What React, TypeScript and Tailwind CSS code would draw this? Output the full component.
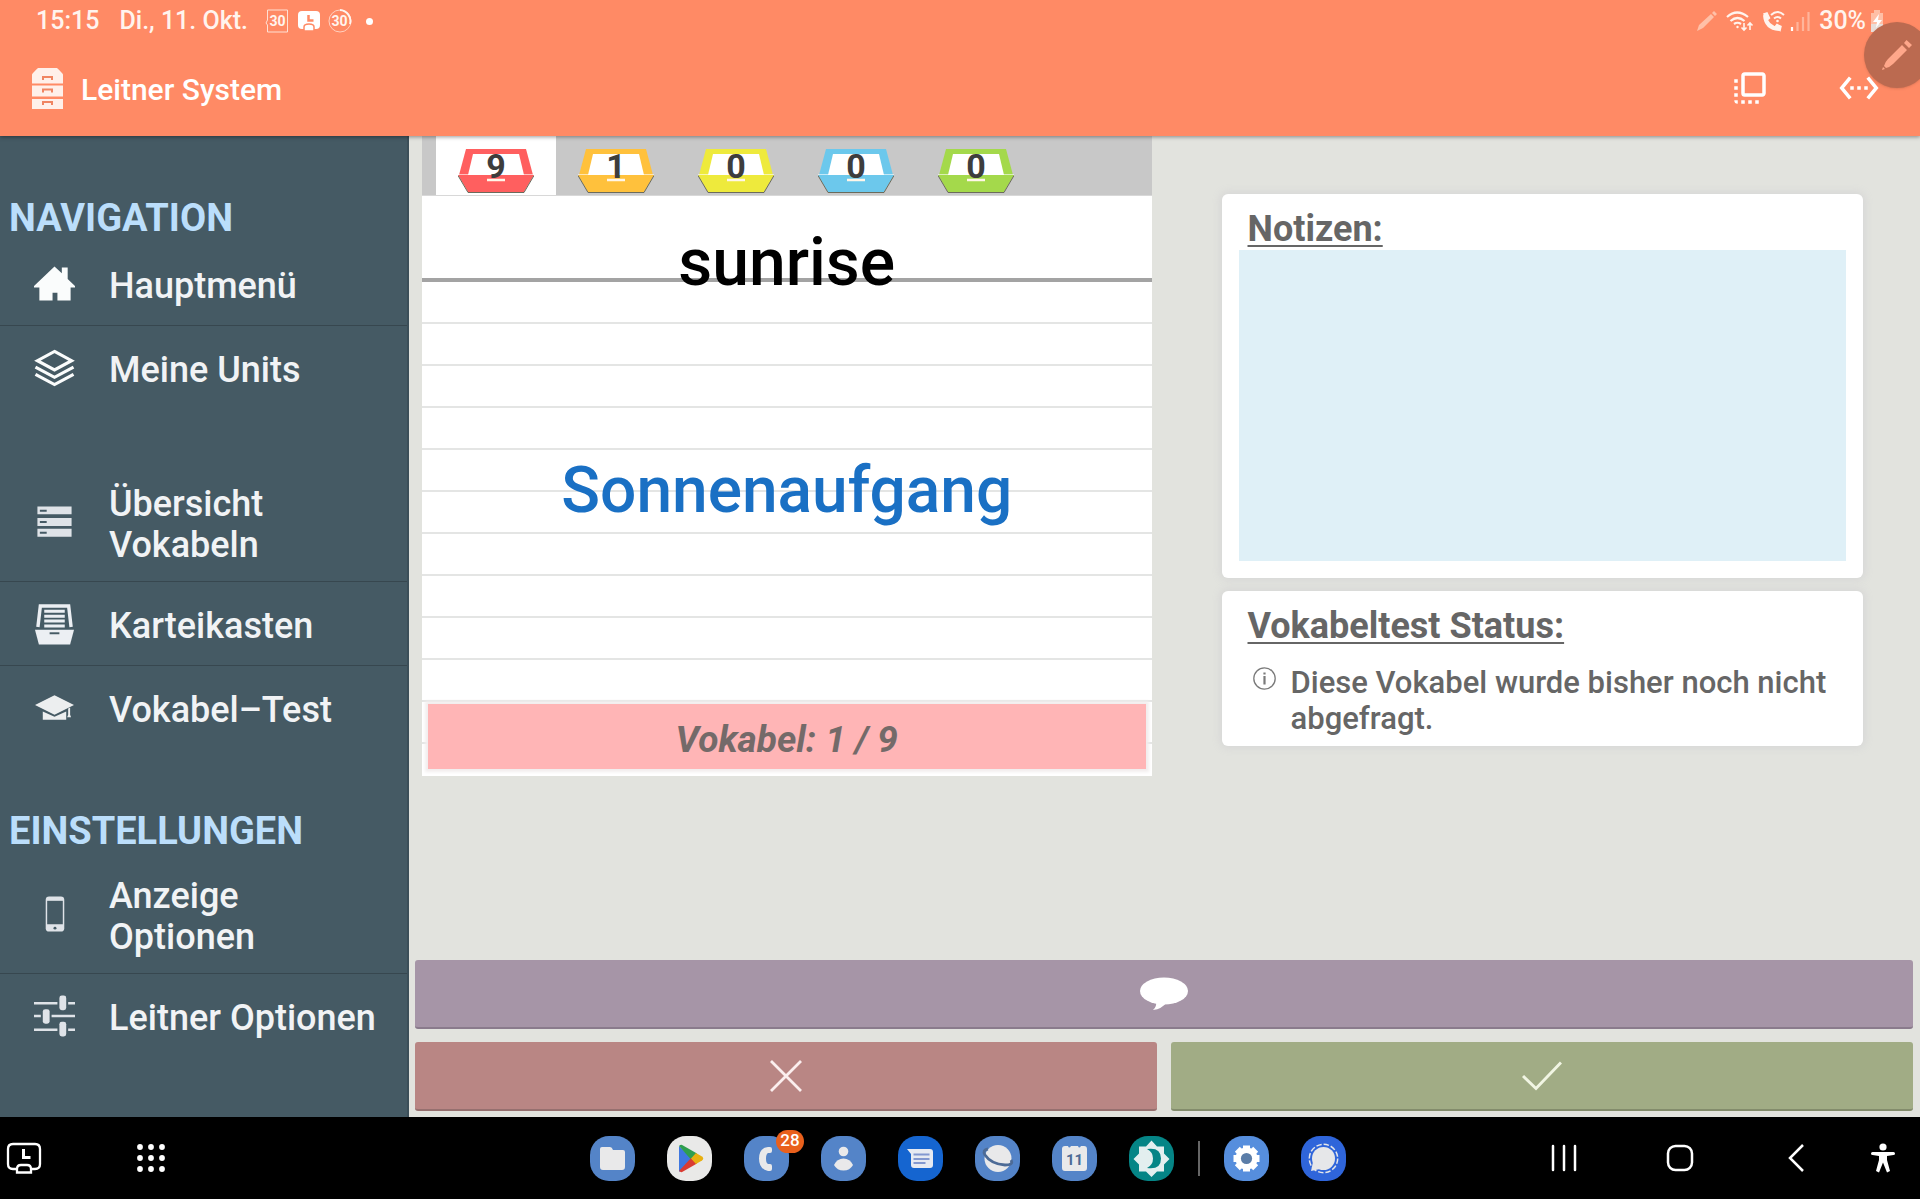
import { FC, ReactNode } from "react";
import { MdFlipToFront, MdSettingsEthernet } from "react-icons/md";

type NavItem = {
  label: string;
  icon: ReactNode;
  wide?: boolean;
};

const HomeIcon = () => (
  <svg viewBox="0 0 42 42" className="size-[42px]" fill="#fafcfc">
    <path d="M21 3 28.500 10V4h6v12L42 23v1.500h-4.500V38H24v-8h-5v8H5.500V24.500H0V23z" />
  </svg>
);

const LayersIcon = () => (
  <svg viewBox="0 0 42 42" className="size-[42px]" fill="none" stroke="#fafcfc" strokeWidth="3.200">
    <path d="M21 4 38.500 13.500 21 23 3.500 13.500z" />
    <path d="M1.500 20 21 30.500 40.500 20M1.500 27.500 21 38 40.500 27.500" />
  </svg>
);

const ListIcon = () => (
  <svg viewBox="0 0 42 42" className="size-[42px]">
    <path d="M3.500 5h35v8h-35zM3.500 17h35v8h-35zM3.500 28h35v8h-35z" fill="#dfe3e8" />
    <path d="M6 9.500h7M6 21h7M6 32h7" stroke="#455a64" strokeWidth="2" />
  </svg>
);

const BoxIcon = () => (
  <svg viewBox="0 0 42 42" className="size-[42px]">
    <path d="M4 24 6.500 2.500h29L38 24" fill="none" stroke="#eceff3" strokeWidth="3.500" />
    <path d="M10.500 8h21M10.500 13h21M10.500 18h21M10.500 23h21" stroke="#eceff3" strokeWidth="3" />
    <path d="M1 27h40l-4 15H5z" fill="#eceff3" />
    <path d="M16 30.500h10" stroke="#455a64" strokeWidth="2" />
  </svg>
);

const CapIcon = () => (
  <svg viewBox="0 0 42 42" className="size-[42px]" fill="#eceeef">
    <path d="M21 8 41 18 21 28 1 18z" />
    <path d="M9 24.500 21 30l12-5.500V33H9zM35 21.500l2-1v7.500l1 2.500h-4l1-2.500z" />
  </svg>
);

const PhoneIcon = () => (
  <svg viewBox="0 0 42 42" className="size-[42px]">
    <rect x="12" y="3" width="19" height="36" rx="3.500" fill="#dfe3e8" />
    <path d="M13.500 7.500h16v24h-16z" fill="#455a64" />
    <circle cx="21.500" cy="35.500" r="1.500" fill="#455a64" />
  </svg>
);

const SlidersIcon = () => (
  <svg viewBox="0 0 42 44" className="h-[44px] w-[42px]">
    <path d="M0 9h24M35 9h7M0 22h7M18 22h24M0 36h24M35 36h7" stroke="#dfe3e8" strokeWidth="2.500" />
    <g fill="#dfe3e8">
      <rect x="26" y="1" width="7" height="15" rx="2.500" />
      <rect x="9" y="15" width="7" height="15" rx="2.500" />
      <rect x="26" y="28" width="7" height="15" rx="2.500" />
    </g>
  </svg>
);

const mainItems: NavItem[] = [
  { label: "Hauptmenü", icon: <HomeIcon /> },
  { label: "Meine Units", icon: <LayersIcon /> },
];

const vocabItems: NavItem[] = [
  { label: "Übersicht Vokabeln", icon: <ListIcon />, wide: true },
  { label: "Karteikasten", icon: <BoxIcon /> },
  { label: "Vokabel–Test", icon: <CapIcon /> },
];

const settingsItems: NavItem[] = [
  { label: "Anzeige Optionen", icon: <PhoneIcon />, wide: true },
  { label: "Leitner Optionen", icon: <SlidersIcon /> },
];

const boxes = [
  { count: 9, color: "#ff5f5f" },
  { count: 1, color: "#ffc13c" },
  { count: 0, color: "#eeea3c" },
  { count: 0, color: "#6cc8ec" },
  { count: 0, color: "#a4d94b" },
];

const NavList: FC<{ items: NavItem[] }> = ({ items }) => (
  <ul className="divide-y divide-[#37474f]">
    {items.map((item) => (
      <li key={item.label}>
        <a
          href="#"
          className="flex min-h-[83px] items-center gap-[34px] py-[15px] pl-[34px] text-[36px] leading-[41px] font-medium text-[#f1f3f5]"
        >
          <span className="flex w-[41px] shrink-0 justify-center">{item.icon}</span>
          <span className={item.wide ? "w-[200px] pt-[6px]" : "pt-[6px] whitespace-nowrap"}>
            {item.label}
          </span>
        </a>
      </li>
    ))}
  </ul>
);

const Sidebar = () => (
  <nav className="w-[409px] shrink-0 border-r-2 border-[#3c4f59] bg-[#455a64] pt-[58px] pb-[60px]">
    <h2 className="pl-[9px] text-[38px] leading-[48px] font-bold text-[#bbdefb]">NAVIGATION</h2>
    <NavList items={mainItems} />
    <div className="h-[54px]" />
    <NavList items={vocabItems} />
    <h2 className="mt-[58px] pl-[9px] text-[38px] leading-[48px] font-bold text-[#bbdefb]">
      EINSTELLUNGEN
    </h2>
    <NavList items={settingsItems} />
  </nav>
);

const StatusBar = () => (
  <div className="flex h-[42px] items-center justify-between pr-9 pl-9 text-[25px] font-medium text-[#fff4ee]">
    <div className="flex items-center">
      <span>15:15</span>
      <span className="ml-5">Di., 11. Okt.</span>
      <svg viewBox="0 0 24 24" className="ml-[17px] size-6">
        <path d="M2.500 1h20v22h-20V16l-1.500-2 1.500-3z" fill="none" stroke="#ffe0d4" strokeWidth="1" />
        <text x="12.500" y="17" textAnchor="middle" fontSize="14" fontWeight="700" fill="#fff4ee">30</text>
      </svg>
      <svg viewBox="0 0 24 20" className="ml-2 h-5 w-6">
        <rect x="1" y="0" width="22" height="18" rx="4" fill="#fff" />
        <path d="M11.500 4v5.500h5" fill="none" stroke="#ff8a65" strokeWidth="2.500" />
        <path d="M7 20v-4q0-3 5-3t5 3v4z" fill="#fff" stroke="#ff8a65" strokeWidth="1.500" />
      </svg>
      <svg viewBox="0 0 24 24" className="ml-[7px] size-6">
        <circle cx="12" cy="12" r="11" fill="none" stroke="#ffd0bf" strokeWidth="1" />
        <path d="M12 1a11 11 0 0 1 10 14" fill="none" stroke="#fff4ee" strokeWidth="2" />
        <text x="11.500" y="17" textAnchor="middle" fontSize="14" fontWeight="700" fill="#fff4ee">30</text>
      </svg>
      <span className="ml-[14px] size-[7px] rounded-full bg-white" />
    </div>
    <div className="flex items-center">
      <svg viewBox="0 0 22 22" className="mr-2 size-[22px]" fill="#ffc0a8">
        <path d="m1 21 2-6L15 4l3 3L7 18zM16 3l2-2 3 3-2 2z" />
      </svg>
      <svg viewBox="0 0 28 22" className="mr-2 h-[22px] w-7" fill="none" stroke="#fff4ee" strokeWidth="2.200">
        <path d="M1 7q10-9 21 0M4.500 11q7-6 14 0M8 14q3.500-2.500 7 0" />
        <circle cx="11.500" cy="17" r="1.200" fill="#fff4ee" stroke="none" />
        <path d="M18 13v7m-2.500-2.500L18 20l2.500-2.500M24 20v-7m-2.500 2.500L24 13l2.500 2.500" strokeWidth="1.600" />
      </svg>
      <svg viewBox="0 0 24 22" className="mr-1 h-[22px] w-6" fill="none" stroke="#fff4ee">
        <path d="M3 5Q4 18 17 19" strokeWidth="4" />
        <path d="M2 4l3-1 2.500 5L5 10zM13 17l2-2.500 4 2-1 4z" fill="#fff4ee" strokeWidth="1.500" />
        <path d="M9 5q6.500-6 13 0M12 8.500q3.500-3 7 0" strokeWidth="2" />
        <circle cx="15.500" cy="11" r="1.300" fill="#fff4ee" stroke="none" />
      </svg>
      <svg viewBox="0 0 20 20" className="mr-[9px] size-5" fill="none" strokeWidth="2.200">
        <path d="M2 20v-4" stroke="#fff" />
        <path d="M7.500 20V11M13 20V6M18.500 20V1" stroke="#ffb59b" />
      </svg>
      <span>30%</span>
      <svg viewBox="0 0 14 22" className="ml-1 h-[22px] w-[14px]">
        <path d="M1 3h3V0h6v3h3v19H1z" fill="#ffbfa6" />
        <path d="M1 14h12v8H1z" fill="#e8ded9" />
        <path d="M9 4 3 12h4l-1 6 6-8H8z" fill="#fff" />
      </svg>
    </div>
  </div>
);

const Header = () => (
  <header className="relative z-10 overflow-hidden bg-[#ff8a65] shadow-[0_1px_4px_rgba(0,0,0,0.4)]">
    <StatusBar />
    <div className="flex h-[94px] items-center pr-[40px] pb-[2px] pl-8">
      <svg viewBox="0 0 31 41" className="h-[41px] w-[31px]" fill="#fff0ea">
        <path d="M0 15.500V6.500Q1 4.500 6 0h19q5 4.500 6 6.500v9zM0 17.500h31v11H0zM0 31h31v10H0z" />
        <path
          d="M11 12V9h9v3M11 24.500v-3h9v3M11 37v-3h9v3"
          fill="none"
          stroke="#f08562"
          strokeWidth="2"
        />
      </svg>
      <h1 className="ml-[18px] pt-1 text-[30px] leading-9 font-medium text-white">Leitner System</h1>
      <button aria-label="Kartenansicht" className="ml-auto text-[42px] text-white">
        <MdFlipToFront />
      </button>
      <button aria-label="Breite anpassen" className="ml-[67px] text-[42px] text-white">
        <MdSettingsEthernet />
      </button>
    </div>
    <button
      aria-label="Stiftmenü"
      className="absolute top-[22px] -right-[10px] flex size-[66px] items-center justify-center rounded-full bg-[#bb6a50] shadow"
    >
      <svg viewBox="0 0 32 32" className="size-8" fill="#ffa78a">
        <path d="M1 31l1-3 2 2zM3 27q1-4 4-7L21 6l5 5-14 14q-3 3-7 4zM23 4l2.500-3 5.500 5-3 3z" />
      </svg>
    </button>
  </header>
);

const Tray: FC<{ count: number; color: string }> = ({ count, color }) => (
  <span className="relative block h-11 w-[76px]">
    <svg viewBox="0 0 76 44" className="h-11 w-[76px]">
      <path d="M8 0h60l7 26H1z" fill={color} />
      <path d="M15 5h46l5 21H10z" fill="#fff" />
      <path d="M0 26h76L66 43H10z" fill={color} />
      <path d="M0 26.500 10 43.500h56l10-17" fill="none" stroke="#6b6b5c" strokeWidth="1" />
      <path d="M0 25.500h76" stroke="#fff" strokeOpacity=".6" strokeWidth="1" />
      <path d="M29 31h18" stroke="#fff6e8" strokeWidth="2.500" />
    </svg>
    <span className="absolute inset-x-0 top-0 text-center text-[34px] leading-[34px] font-bold text-[#3d3d3d]">
      {count}
    </span>
  </span>
);

const FlashCard = () => (
  <section className="mx-[13px] bg-white">
    <div className="flex h-[60px] border-b border-[#d8d8d8] bg-[#c8c8c8] pl-[14px]">
      {boxes.map((box, i) => (
        <button
          key={i}
          className={
            i === 0
              ? "flex w-[120px] justify-center bg-white pt-[13px]"
              : "flex w-[120px] justify-center pt-[13px]"
          }
        >
          <Tray count={box.count} color={box.color} />
        </button>
      ))}
    </div>
    <div className="h-[86px] border-b-4 border-[#a3a3a3] pt-[28px]">
      <p className="text-center text-[66px] leading-[78px] font-medium text-black">sunrise</p>
    </div>
    <div className="bg-[repeating-linear-gradient(to_bottom,transparent_0_40px,#e4e5e4_40px_42px)] px-[6px] pt-[170px] pb-[7px]">
      <p className="text-center text-[64px] leading-[78px] font-medium text-[#1a70c4]">Sonnenaufgang</p>
      <p className="mt-[174px] bg-[#ffb5b6] pt-[6px] text-center text-[37px] leading-[59px] font-bold text-[#746a69] italic shadow-[0_0_3px_3px_#f2eeee]">
        Vokabel: 1 / 9
      </p>
    </div>
  </section>
);

const InfoPanel = () => (
  <aside className="mx-[57px] pt-[58px] text-[#666]">
    <div className="rounded-md bg-white px-[17px] pt-[14px] pb-[17px] shadow-[0_0_8px_2px_#d6d6d6]">
      <label
        htmlFor="notes"
        className="block pl-[9px] text-[36px] leading-[42px] font-bold underline decoration-2 underline-offset-4"
      >
        Notizen:
      </label>
      <textarea id="notes" className="block h-[311px] w-full resize-none bg-[#dff0f7] p-2 text-[30px]" />
    </div>
    <div className="mt-[13px] rounded-md bg-white px-[26px] pt-[14px] pb-[9px] shadow-[0_0_8px_2px_#d6d6d6]">
      <h3 className="text-[36px] leading-[42px] font-bold underline decoration-2 underline-offset-4">
        Vokabeltest Status:
      </h3>
      <div className="mt-[18px] flex gap-[15px] pl-[5px]">
        <svg viewBox="0 0 23 23" className="mt-[2px] size-[23px] shrink-0" fill="none" stroke="#7a7a7a">
          <circle cx="11.500" cy="11.500" r="10.700" strokeWidth="1.300" />
          <path d="M11.500 9v8.500M11.500 5.500v2" strokeWidth="2.200" />
        </svg>
        <p className="text-[31px] leading-[36px] font-medium">
          Diese Vokabel wurde bisher noch nicht abgefragt.
        </p>
      </div>
    </div>
  </aside>
);

const AnswerBar = () => (
  <div className="mt-auto pr-[7px] pb-[6px] pl-[6px]">
    <button
      aria-label="Kommentar"
      className="flex h-[69px] w-full items-center justify-center rounded-[3px] border-b-2 border-[#8a7b8c] bg-[#a695a7]"
    >
      <svg viewBox="0 0 48 34" className="h-[34px] w-12" fill="#fff">
        <ellipse cx="24" cy="14" rx="24" ry="13.500" />
        <path d="M16 24q1 6-3 9 9-1 14-8z" />
      </svg>
    </button>
    <div className="mt-[13px] grid grid-cols-2 gap-[14px]">
      <button
        aria-label="Falsch"
        className="flex h-[69px] items-center justify-center rounded-[3px] border-b-2 border-[#96706f] bg-[#b98684]"
      >
        <svg viewBox="0 0 32 32" className="size-8" stroke="#fbeeee" strokeWidth="2.800">
          <path d="M1 1l30 30M31 1 1 31" />
        </svg>
      </button>
      <button
        aria-label="Richtig"
        className="flex h-[69px] items-center justify-center rounded-[3px] border-b-2 border-[#838c6c] bg-[#a1ac85]"
      >
        <svg viewBox="0 0 40 30" className="h-[30px] w-10" fill="none" stroke="#f1f5e3" strokeWidth="3">
          <path d="m1 15 13 12.500L39 1.500" />
        </svg>
      </button>
    </div>
  </div>
);

const AppIcon: FC<{ label: string; className: string; children: ReactNode }> = ({
  label,
  className,
  children,
}) => (
  <button aria-label={label} className={`size-[45px] overflow-hidden rounded-[19px] ${className}`}>
    <svg viewBox="0 0 45 45" className="size-[45px]">
      {children}
    </svg>
  </button>
);

const Taskbar = () => (
  <footer className="grid h-[82px] grid-cols-[1fr_auto_1fr] items-center bg-black text-white">
    <div className="flex items-center pl-[6px]">
      <button aria-label="Uhr">
        <svg viewBox="0 0 36 32" className="h-8 w-9" fill="none" stroke="#fff" strokeWidth="2.300">
          <path d="M10 27H7q-5 0-5-5V7q0-5 5-5h22q5 0 5 5v15q0 5-5 5h-3" />
          <path d="M17.500 7v8.500h7" strokeWidth="3" />
          <path d="M11 30.500V27q0-4 4-4h6q4 0 4 4v3.500z" />
        </svg>
      </button>
      <button aria-label="Alle Apps" className="ml-[95px]">
        <svg viewBox="0 0 28 28" className="size-7" fill="#fff">
          {[3, 14, 25].map((y) => [3, 14, 25].map((x) => <circle key={`${x}-${y}`} cx={x} cy={y} r="2.900" />))}
        </svg>
      </button>
    </div>

    <div className="flex items-center gap-8 pl-4">
      <AppIcon label="Eigene Dateien" className="bg-[#5484c8]">
        <path d="M10 13q0-2 2-2h8q2 0 3 3h10q2 0 2 2v15q0 3-3 3H13q-3 0-3-3z" fill="#e9e9ea" />
      </AppIcon>
      <AppIcon label="Play Store" className="bg-[#e9e9e8]">
        <path d="M12 10v26l13-13z" fill="#3f78e0" />
        <path d="M12 10q2-2 4-.500L30 17.500 24 23.500z" fill="#2f9e4f" />
        <path d="M12 35q2 2 4 .500l14-8-6-5.500z" fill="#d93b33" />
        <path d="m29 17 6 3.500q2.500 2 0 4L29 28l-5-5.500z" fill="#e8b010" />
      </AppIcon>
      <div className="relative h-[45px]">
        <AppIcon label="Telefon" className="bg-[#5484c8]">
          <path
            d="M28 13q0-2-2-2h-2q-9 1-9 11.500T24 35h2q2 0 2-2v-3q0-2-2-2h-2q-2-1-2-5.500t2-5.500h2q2 0 2-2z"
            fill="#e9e9ea"
          />
        </AppIcon>
        <span className="absolute -top-[6px] -right-[15px] flex h-[23px] w-7 items-center justify-center rounded-full bg-[#e9601c] text-[17px] font-medium">
          28
        </span>
      </div>
      <AppIcon label="Kontakte" className="bg-[#5484c8]">
        <circle cx="22.500" cy="15.500" r="4.800" fill="#e9e9ea" />
        <path d="M13 29q3-6.500 9.500-6.500T32 29q-3 5.500-9.500 5.500T13 29z" fill="#e9e9ea" />
      </AppIcon>
      <AppIcon label="Nachrichten" className="bg-[#1565d0]">
        <path d="M9 13h23q3 0 3 3v13q0 3-3 3H16q-3 0-3-3V18z" fill="#e6eaf2" />
        <path d="M15.500 18.500h16M15.500 23h16M15.500 27h12" stroke="#8298d0" strokeWidth="1.800" />
      </AppIcon>
      <AppIcon label="Internet" className="bg-[#5484c8]">
        <circle cx="23" cy="22.500" r="13.500" fill="#e9e9ea" />
        <path d="M13 13Q7 14 10 19q6 9 20 10 9 0 6-5" fill="none" stroke="#4d6b96" strokeWidth="2.800" />
      </AppIcon>
      <AppIcon label="Kalender" className="bg-[#5484c8]">
        <path
          d="M13 10h3q1 3 3 0h7q1 3 3 0h3q3 0 3 3v19q0 3-3 3H13q-3 0-3-3V13q0-3 3-3z"
          fill="#e9e9ea"
        />
        <text x="22.500" y="28.500" textAnchor="middle" fontSize="15" fontWeight="700" fill="#4d6b96">
          11
        </text>
      </AppIcon>
      <AppIcon label="Blaulichtfilter" className="bg-[#058586]">
        <path
          d="M22.500 4.500 28 10.500h7v7l5.500 5.500-5.500 5.500v7h-7L22.500 41 17 35.500h-7v-7L4.500 23 10 17.500v-7h7z"
          fill="#e3efef"
        />
        <path d="M18 13q14-2 14 9.500T18 32q6-3 6-9.500T18 13z" fill="#058586" />
      </AppIcon>
      <span className="-mx-2 h-[35px] w-[2px] bg-[#666]" />
      <AppIcon label="Einstellungen" className="bg-[#568edd]">
        <g fill="#fff">
          <circle cx="22.500" cy="22.500" r="11" />
          <path d="M19 9.500h7v26h-7zM9.500 19h26v7h-26z" />
          <path d="M19 9.500h7v26h-7zM9.500 19h26v7h-26z" transform="rotate(45 22.500 22.500)" />
        </g>
        <circle cx="22.500" cy="22.500" r="5.600" fill="#5b7da8" />
      </AppIcon>
      <AppIcon label="Signal" className="bg-[#2f65da]">
        <circle cx="22.500" cy="22.500" r="11.500" fill="#e6e7e9" />
        <path d="m12 26-2 9 9-2z" fill="#e6e7e9" />
        <circle
          cx="22.500"
          cy="22.500"
          r="14.200"
          fill="none"
          stroke="#e6e7e9"
          strokeWidth="1.500"
          strokeDasharray="5.400 2"
        />
      </AppIcon>
    </div>

    <div className="flex items-center justify-end pr-2">
      <button aria-label="Letzte Apps" className="flex w-[116px] justify-center">
        <svg viewBox="0 0 28 28" className="size-7" stroke="#fff" strokeWidth="2.500" strokeLinecap="round">
          <path d="M3 2v24M14 2v24M25 2v24" />
        </svg>
      </button>
      <button aria-label="Startseite" className="flex w-[116px] justify-center">
        <svg viewBox="0 0 28 28" className="size-7" fill="none" stroke="#fff" strokeWidth="2.500">
          <rect x="2" y="2" width="24" height="24" rx="7.500" />
        </svg>
      </button>
      <button aria-label="Zurück" className="flex w-[116px] justify-center">
        <svg viewBox="0 0 28 28" className="size-7" fill="none" stroke="#fff" strokeWidth="2.500">
          <path d="M21 1 8 14l13 13" />
        </svg>
      </button>
      <button aria-label="Bedienungshilfe" className="flex w-[58px] justify-center">
        <svg viewBox="0 0 24 30" className="h-[30px] w-6" fill="#fff">
          <circle cx="12" cy="4" r="3.600" />
          <path d="M1.500 9h21q1.500 0 1.500 1.500T22.500 12L16 13v4l3 11-3 1.500-4-10-4 10L5 28l3-11v-4L1.500 12Q0 12 0 10.500T1.500 9z" />
        </svg>
      </button>
    </div>
  </footer>
);

const App: FC = () => {
  return (
    <div className="flex min-h-screen flex-col overflow-hidden bg-[#e2e3de] font-['Roboto',sans-serif]">
      <Header />
      <div className="flex flex-1">
        <Sidebar />
        <main className="flex min-w-0 flex-1 flex-col">
          <div className="grid grid-cols-2">
            <FlashCard />
            <InfoPanel />
          </div>
          <AnswerBar />
        </main>
      </div>
      <Taskbar />
    </div>
  );
};

export default App;
